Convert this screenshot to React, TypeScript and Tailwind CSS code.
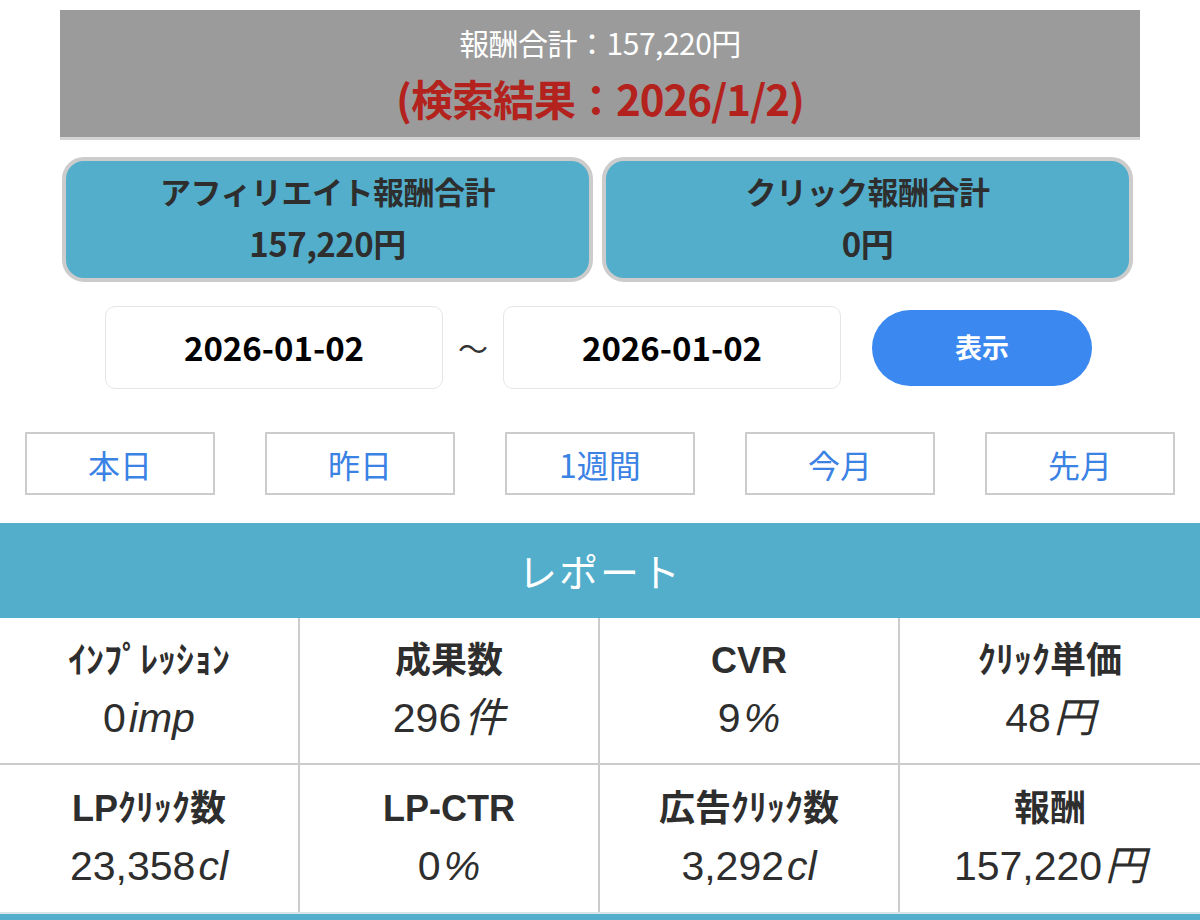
const jp = "font-['Noto_Sans_CJK_JP',sans-serif]";

const stats = [
  { label: 'ｲﾝﾌﾟﾚｯｼｮﾝ', value: '0', unit: 'imp' },
  { label: '成果数', value: '296', unit: '件' },
  { label: 'CVR', value: '9', unit: '%' },
  { label: 'ｸﾘｯｸ単価', value: '48', unit: '円' },
  { label: 'LPｸﾘｯｸ数', value: '23,358', unit: 'cl' },
  { label: 'LP-CTR', value: '0', unit: '%' },
  { label: '広告ｸﾘｯｸ数', value: '3,292', unit: 'cl' },
  { label: '報酬', value: '157,220', unit: '円' },
];

const periods = ['本日', '昨日', '1週間', '今月', '先月'];

export default function App() {
  return (
    <div className={`w-[1200px] h-[920px] overflow-hidden bg-white pt-[10px] ${jp}`}>
      {/* Summary header */}
      <div className="mx-[60px] h-[130px] bg-[#9b9b9b] border-b-[3px] border-[#d4d4d4] flex flex-col items-center pt-[14px]">
        <div className="text-white text-[30px] leading-[36px] tracking-[-0.5px]">報酬合計：157,220円</div>
        <div className="text-[#b3221d] text-[42px] leading-[52px] font-bold mt-[12px] tracking-[-1px]">
          (検索結果：2026/1/2)
        </div>
      </div>

      {/* Totals */}
      <div className="ml-[62px] w-[1071px] mt-[17px] grid grid-cols-2 gap-[9px]">
        {[
          ['アフィリエイト報酬合計', '157,220円'],
          ['クリック報酬合計', '0円'],
        ].map(([t, v]) => (
          <div
            key={t}
            className="h-[125px] rounded-[22px] border-[4px] border-[#cccccc] bg-[#52aecb] flex flex-col items-center justify-center pb-[6px] text-[#2e2e2e] font-bold"
          >
            <div className="text-[31px] leading-[40px] tracking-[-0.5px]">{t}</div>
            <div className="text-[33px] leading-[40px] mt-[12px] tracking-[-0.5px] font-semibold">{v}</div>
          </div>
        ))}
      </div>

      {/* Date range */}
      <div className="mt-[24px] flex items-center pl-[105px]">
        <div className="w-[338px] h-[83px] rounded-[10px] border border-[#e6e6e6] flex items-center justify-center text-black font-bold text-[33px]">
          2026-01-02
        </div>
        <div className="w-[60px] text-center text-[30px] text-[#333]">～</div>
        <div className="w-[338px] h-[83px] rounded-[10px] border border-[#e6e6e6] flex items-center justify-center text-black font-bold text-[33px]">
          2026-01-02
        </div>
        <button className="ml-[31px] w-[220px] h-[76px] rounded-full bg-[#3b88f0] text-white font-bold text-[27px]">
          表示
        </button>
      </div>

      {/* Period buttons */}
      <div className="mt-[43px] flex justify-between px-[25px]">
        {periods.map((p) => (
          <div
            key={p}
            className="w-[190px] h-[63px] border-2 border-[#cccccc] flex items-center justify-center text-[#3a82e4] text-[32px]"
          >
            {p}
          </div>
        ))}
      </div>

      {/* Report */}
      <div className="mt-[28px] h-[95px] bg-[#52aecb] flex items-center justify-center text-white text-[39px] tracking-[2px]">
        レポート
      </div>
      <div className="grid grid-cols-4">
        {stats.map((s, i) => (
          <div
            key={s.label}
            className={`h-[147px] flex flex-col items-center justify-center border-[#cccccc] ${
              i % 4 !== 3 ? 'border-r-2' : ''
            } ${i < 4 ? 'border-b-2' : ''}`}
          >
            <div className="text-[#2e2e2e] font-bold text-[36px] leading-[44px] font-['Liberation_Sans','Noto_Sans_CJK_JP',sans-serif]">
              {s.label}
            </div>
            <div className="mt-[10px] text-[#2e2e2e] text-[41px] leading-[50px] font-['Liberation_Sans','Noto_Sans_CJK_JP',sans-serif]">
              {s.value}
              <span className="italic ml-[3px]">{s.unit}</span>
            </div>
          </div>
        ))}
      </div>
      <div className="h-[10px] bg-[#52aecb] border-t-2 border-[#d8e6ea]" />
    </div>
  );
}
